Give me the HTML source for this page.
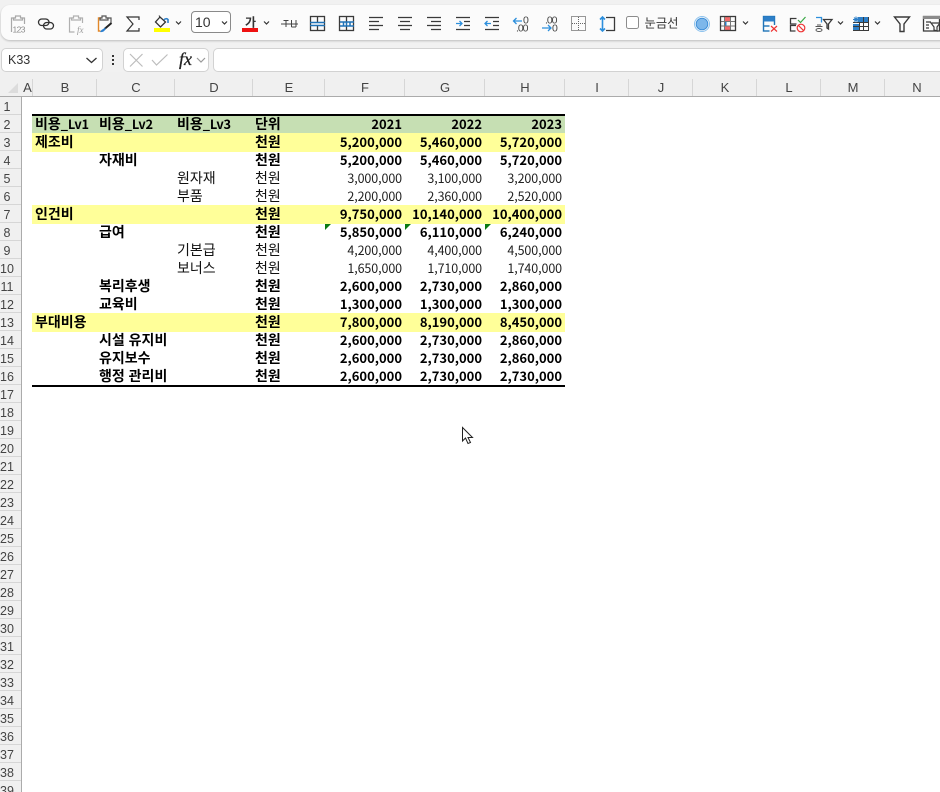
<!DOCTYPE html>
<html lang="ko"><head><meta charset="utf-8"><title>Sheet</title>
<style>
html,body{margin:0;padding:0;background:#fff;width:940px;height:792px;overflow:hidden}
#page{width:940px;height:792px;position:relative;overflow:hidden;font-family:"Liberation Sans","Noto Sans CJK KR",sans-serif;color:#000}
.a{position:absolute}
#top{left:0;top:0;width:940px;height:72px;background:#f1f1f1}
#bar{left:1px;top:5px;width:960px;height:35px;background:#fbfbfb;border-radius:9px;box-shadow:0 1px 2px rgba(0,0,0,.22)}
.box{position:absolute;background:#fff;border:1px solid #d2d2d2;border-radius:5px;box-sizing:border-box}
#ch{left:0;top:72px;width:940px;height:24px;background:#f0f0f0;border-bottom:1px solid #ababab}
#rh{left:0;top:97px;width:21px;height:695px;background:#f0f0f0;border-right:1px solid #ababab}
.c{position:absolute;top:72px;height:24px;line-height:31px;font-size:13px;color:#444;text-align:center;box-sizing:border-box}
.c:after{content:"";position:absolute;right:0;top:7px;bottom:0;width:1px;background:#d6d6d6}
.r{position:absolute;left:0;width:21px;height:18px;box-sizing:border-box;border-bottom:1px solid #d6d6d6;font-size:12.5px;line-height:18px;color:#444;overflow:hidden}
.r span{position:absolute;left:-3px;top:1px;width:20px;text-align:center}
.b{position:absolute;height:19px;left:32px;width:533px}
.t{position:absolute;font-family:"Noto Sans CJK KR","Liberation Sans",sans-serif;font-size:14px;line-height:18px;white-space:pre;color:#111}
.t i{font-style:normal;font-size:12.8px;letter-spacing:-.2px}
.w{font-weight:700;color:#000}
.n{position:absolute;text-align:right;font-family:"Noto Sans CJK KR","Liberation Sans",sans-serif;font-size:12.5px;letter-spacing:-.1px;line-height:18px;width:76px;color:#222}
.n.w{color:#000;font-weight:700;font-size:13px;letter-spacing:0}
.tri{position:absolute;width:0;height:0;border-top:6px solid #0a7a12;border-right:6px solid transparent}
svg{position:absolute;overflow:visible}
.s{fill:none;stroke:#3a3a3a;stroke-width:1.3}
.bl{fill:none;stroke:#1f73b7;stroke-width:1.5}
.lb{fill:none;stroke:#2d8fdc;stroke-width:1.3}
.chev{fill:none;stroke:#333;stroke-width:1.2}
</style></head><body><div id="page">
<div id="top" class="a"></div>
<div id="bar" class="a"></div>

<svg class="tb" style="left:0;top:0" width="940" height="72" viewBox="0 0 940 72">
<!-- paste values -->
<g fill="none" stroke="#a8a8a8" stroke-width="1.2">
<path d="M15 18h-3.500v14M21 18h3.500v6"/><path d="M15.500 18v-2h5v2h2v2h-9v-2z"/>
</g>
<text x="12.500" y="32.500" font-size="8.500" fill="#8c8c8c" font-family="Liberation Sans" textLength="13">123</text>
<!-- link -->
<rect x="38.500" y="19" width="10.500" height="6.500" rx="3.250" fill="none" stroke="#333" stroke-width="1.300"/>
<rect x="43.500" y="22.500" width="10" height="6.500" rx="3.250" fill="none" stroke="#333" stroke-width="1.300"/>
<!-- paste fx -->
<g fill="none" stroke="#b0b0b0" stroke-width="1.2">
<path d="M73 18h-3.500v14h5M79 18h3.500v5"/><path d="M73.500 18v-2h5v2h2v2h-9v-2z"/>
</g>
<text x="77" y="33" font-size="9" fill="#9a9a9a" font-style="italic" font-family="Liberation Serif">fx</text>
<!-- paste format -->
<path d="M101 18h-2.500v13h2" fill="none" stroke="#e2882a" stroke-width="1.4"/>
<path d="M107 18h4v5" fill="none" stroke="#555" stroke-width="1.2"/>
<path d="M102 18v-2h4v2h2v2h-8v-2z" fill="none" stroke="#555" stroke-width="1.2"/>
<path d="M111.500 23l-7 6" fill="none" stroke="#222" stroke-width="2"/>
<path d="M105.500 27.500l-4 2.500-1.500 2c2.500.5 4.500-.5 5.500-3z" fill="#2a7fd0"/>
<!-- sigma -->
<path d="M139 20v-3h-12l6 7-6 7h12v-3" fill="none" stroke="#333" stroke-width="1.2"/>
<!-- fill -->
<path d="M160 17l-4.500 5 5 5 5-5z" fill="none" stroke="#333" stroke-width="1.3"/>
<path d="M159 15.500l1.500 2.500" stroke="#333" fill="none"/>
<path d="M164 20a2.500 2.500 0 0 1 4-.5v3.500" fill="none" stroke="#2d7fc8" stroke-width="1.6"/>
<rect x="154" y="28" width="16" height="4" fill="#ffff00"/>
<path class="chev" d="M176 21.500l2.500 2.500 2.500-2.500"/>
<!-- font size -->
<rect x="191.500" y="11.500" width="39" height="21" rx="3.500" fill="#fff" stroke="#8a8a8a"/>
<text x="195" y="27" font-size="14" fill="#333" font-family="Liberation Sans">10</text>
<path class="chev" d="M222 21.500l2.500 2.500 2.500-2.500"/>
<!-- Ga -->
<text x="245" y="26.500" font-size="12" font-weight="700" fill="#333" font-family="Noto Sans CJK KR">가</text>
<rect x="242" y="28" width="16" height="4" fill="#ee1111"/>
<path class="chev" d="M264 21.500l2.500 2.500 2.500-2.500"/>
<!-- strikethrough -->
<path d="M281 24h17M283.500 20.500h5M286 20.500v6.500M291.500 20v7M296 20v7M291.500 27h4.500" fill="none" stroke="#444" stroke-width="1"/>
<!-- border icons -->
<rect class="s" x="310.500" y="16.500" width="14" height="14"/><path class="s" d="M317.500 16.500v6M317.500 26v4.500"/><path class="bl" d="M310 22.500h15M310 25.500h15"/>
<rect class="s" x="339.500" y="16.500" width="14" height="14"/><path class="s" d="M346.500 16.500v7M346.500 26v4.500"/><path class="bl" d="M340 22h14M340 26h14M343.500 22v4M346.500 22v4M350 22v4"/>
<!-- aligns -->
<path class="s" d="M369 17.500h14M369 21.500h10M369 25.500h14M369 29.500h10"/>
<path class="s" d="M398 17.500h14M400 21.500h10M398 25.500h14M400 29.500h10"/>
<path class="s" d="M427 17.500h14M431 21.500h10M427 25.500h14M431 29.500h10"/>
<path class="s" d="M456 17.500h14M464 21.500h6M464 25.500h6M456 29.500h14"/>
<path class="lb" d="M456 23.500h6M459.500 21l2.500 2.500-2.500 2.500"/>
<path class="s" d="M485 17.500h14M493 21.500h6M493 25.500h6M485 29.500h14"/>
<path class="lb" d="M491 23.500h-6M487.500 21l-2.500 2.500 2.500 2.500"/>
<!-- decimals -->
<path class="lb" d="M514 21h8M516.500 18l-3 3 3 3"/>
<text x="523" y="23.500" font-size="10.500" fill="#444" font-family="Liberation Sans" textLength="5.500">0</text>
<text x="516" y="31.500" font-size="10.500" fill="#444" font-family="Liberation Sans" textLength="12.500">.00</text>
<text x="545" y="23.500" font-size="10.500" fill="#444" font-family="Liberation Sans" textLength="12.500">.00</text>
<path class="lb" d="M542 28h9M548 25l3 3-3 3"/>
<text x="552" y="31.500" font-size="10.500" fill="#444" font-family="Liberation Sans" textLength="5.500">0</text>
<!-- dotted -->
<rect x="571.500" y="16.500" width="14" height="14" fill="none" stroke="#333" stroke-dasharray="1 1"/>
<path d="M578.500 17v13M572 23.500h13" fill="none" stroke="#666" stroke-dasharray="1 1"/>
<!-- row height -->
<path class="lb" style="stroke-width:1.6" d="M602.500 17v14M600 19.500l2.500-2.500 2.500 2.500M600 28.500l2.500 2.500 2.500-2.500"/>
<path class="s" d="M606 17.500h8.500v13h-8.500"/>
<!-- checkbox -->
<rect x="626.500" y="16.500" width="12" height="12" rx="2" fill="#fff" stroke="#8c8c8c"/>
<text x="644.500" y="27.500" font-size="12.300" fill="#333" font-family="Noto Sans CJK KR">눈금선</text>
<!-- circle -->
<circle cx="702" cy="24" r="7.500" fill="none" stroke="#8ec3ee" stroke-width="1"/>
<circle cx="702" cy="24" r="5.800" fill="#7db7ea" stroke="#3f8fd8" stroke-width="1"/>
<!-- grid red -->
<rect x="724" y="17" width="6.500" height="5" fill="#f36b6b"/><rect x="724" y="26" width="6.500" height="5" fill="#f36b6b"/><rect x="724" y="22" width="2.500" height="4" fill="#2d7fc8"/>
<path d="M724.500 17v14M730.500 17v14M720.500 21.500h15M720.500 26h15" fill="none" stroke="#777" stroke-width="1"/>
<rect class="s" x="720.500" y="16.500" width="15" height="14"/>
<path class="chev" d="M743 21.500l2.500 2.500 2.500-2.500"/>
<!-- remove dup -->
<rect x="763.500" y="16.500" width="11" height="14.500" fill="none" stroke="#1f73b7" stroke-width="1.400"/><rect x="763.500" y="16.500" width="11" height="5" fill="#2d7fc8"/><path d="M763.500 26h6" stroke="#1f73b7" stroke-width="1.400"/>
<rect x="769.500" y="25" width="8.500" height="8" fill="#fbfbfb"/>
<path d="M771 26l6 5.500M777 26l-6 5.500" fill="none" stroke="#e33" stroke-width="1.200"/>
<!-- validation -->
<path class="s" d="M796.500 18.500h-6v5.500h6M796 25.500h-5.500v5.500h5"/>
<path d="M798 20l2.500 2.500 5-5.500" fill="none" stroke="#39a845" stroke-width="1.2"/>
<circle cx="801" cy="28" r="3.800" fill="none" stroke="#e33" stroke-width="1.2"/><path d="M798.500 25.500l5 5" stroke="#e33" stroke-width="1.2"/>
<!-- filter ko -->
<path class="lb" d="M816 17.500h5.500v5"/>
<path d="M815.500 26.500h7M817 25h4M816 30a3 1.500 0 0 0 6 0a3 1.500 0 0 0-6 0" fill="none" stroke="#555" stroke-width="1"/>
<path class="s" d="M823.500 19.500h8.500l-3.500 4.500v5l-1.500-1v-4z"/>
<path class="chev" d="M838 21.500l2.500 2.500 2.500-2.500"/>
<!-- freeze -->
<rect x="858" y="17" width="11" height="5" fill="#2d7fc8"/><rect x="853" y="24" width="6" height="7" fill="#2d7fc8"/>
<path d="M859.500 22v9M863.500 17v14M853 22.500h16M853 26.500h16M868.500 17v14M853 30.500h16" fill="none" stroke="#3a3a3a" stroke-width="1"/>
<path d="M853 19.500h6M856 16.500v6M854 17.500l4 4M858 17.500l-4 4" stroke="#2d7fc8" stroke-width="1" fill="none"/>
<path class="chev" d="M875 21.500l2.500 2.500 2.500-2.500"/>
<!-- funnel -->
<path d="M894.500 17h15l-5.500 7v7.500h-4v-7.500z" fill="none" stroke="#3a3a3a" stroke-width="1.4"/>
<!-- advanced filter -->
<rect x="923.500" y="16.500" width="16" height="14.500" fill="none" stroke="#3a3a3a" stroke-width="1.300"/><rect x="923" y="16" width="17" height="3" fill="#8b8b8b"/>
<path class="s" d="M926 22h5M926 25h3M926 28h3"/><path d="M931 23h9l-3 4v4l-3-1v-3z" fill="#fbfbfb" stroke="#3a3a3a" stroke-width="1.200"/>
</svg>

<!-- formula bar -->
<div class="box" style="left:1px;top:48px;width:102px;height:24px"></div>
<div class="a" style="left:8px;top:51px;font-size:12.500px;line-height:18px;color:#333">K33</div>
<div class="box" style="left:123px;top:48px;width:86px;height:24px"></div>
<div class="box" style="left:213px;top:48px;width:727px;height:24px;border-right:0;border-radius:5px 0 0 5px"></div>
<svg style="left:0;top:0" width="300" height="72" viewBox="0 0 300 72">
<path d="M86.500 58l5 4.500 5-4.500" fill="none" stroke="#333" stroke-width="1.300"/>
<rect x="112" y="55" width="2" height="2" fill="#333"/><rect x="112" y="59" width="2" height="2" fill="#333"/><rect x="112" y="63" width="2" height="2" fill="#333"/>
<path d="M130 54l12.500 12.500M142.500 54l-12.500 12.500" stroke="#bdbdbd" stroke-width="1.200" fill="none"/>
<path d="M152 60l4.500 5 11-10.500" stroke="#bdbdbd" stroke-width="1.200" fill="none"/>
<text x="179" y="65" font-size="18" font-style="italic" fill="#222" stroke="#222" stroke-width=".3" font-family="Liberation Serif">fx</text>
<path d="M197 58l4 4 4-4" fill="none" stroke="#999" stroke-width="1.200"/>
</svg>

<!-- column headers -->
<div id="ch" class="a"></div>
<svg style="left:0;top:72px" width="22" height="24"><path d="M18 11v10H8z" fill="#dcdcdc"/></svg>
<div class="c" style="left:22px;width:11px">A</div>
<div class="c" style="left:33px;width:64px">B</div>
<div class="c" style="left:97px;width:78px">C</div>
<div class="c" style="left:175px;width:78px">D</div>
<div class="c" style="left:253px;width:72px">E</div>
<div class="c" style="left:325px;width:80px">F</div>
<div class="c" style="left:405px;width:80px">G</div>
<div class="c" style="left:485px;width:80px">H</div>
<div class="c" style="left:565px;width:64px">I</div>
<div class="c" style="left:629px;width:64px">J</div>
<div class="c" style="left:693px;width:64px">K</div>
<div class="c" style="left:757px;width:64px">L</div>
<div class="c" style="left:821px;width:64px">M</div>
<div class="c" style="left:885px;width:64px">N</div>

<!-- row headers -->
<div id="rh" class="a"></div>
<div class="r" style="top:97px"><span>1</span></div>
<div class="r" style="top:115px"><span>2</span></div>
<div class="r" style="top:133px"><span>3</span></div>
<div class="r" style="top:151px"><span>4</span></div>
<div class="r" style="top:169px"><span>5</span></div>
<div class="r" style="top:187px"><span>6</span></div>
<div class="r" style="top:205px"><span>7</span></div>
<div class="r" style="top:223px"><span>8</span></div>
<div class="r" style="top:241px"><span>9</span></div>
<div class="r" style="top:259px"><span>10</span></div>
<div class="r" style="top:277px"><span>11</span></div>
<div class="r" style="top:295px"><span>12</span></div>
<div class="r" style="top:313px"><span>13</span></div>
<div class="r" style="top:331px"><span>14</span></div>
<div class="r" style="top:349px"><span>15</span></div>
<div class="r" style="top:367px"><span>16</span></div>
<div class="r" style="top:385px"><span>17</span></div>
<div class="r" style="top:403px"><span>18</span></div>
<div class="r" style="top:421px"><span>19</span></div>
<div class="r" style="top:439px"><span>20</span></div>
<div class="r" style="top:457px"><span>21</span></div>
<div class="r" style="top:475px"><span>22</span></div>
<div class="r" style="top:493px"><span>23</span></div>
<div class="r" style="top:511px"><span>24</span></div>
<div class="r" style="top:529px"><span>25</span></div>
<div class="r" style="top:547px"><span>26</span></div>
<div class="r" style="top:565px"><span>27</span></div>
<div class="r" style="top:583px"><span>28</span></div>
<div class="r" style="top:601px"><span>29</span></div>
<div class="r" style="top:619px"><span>30</span></div>
<div class="r" style="top:637px"><span>31</span></div>
<div class="r" style="top:655px"><span>32</span></div>
<div class="r" style="top:673px"><span>33</span></div>
<div class="r" style="top:691px"><span>34</span></div>
<div class="r" style="top:709px"><span>35</span></div>
<div class="r" style="top:727px"><span>36</span></div>
<div class="r" style="top:745px"><span>37</span></div>
<div class="r" style="top:763px"><span>38</span></div>
<div class="r" style="top:781px;height:11px;border-bottom:0"><span>39</span></div>

<!-- fills -->
<div class="b" style="top:115px;height:18px;background:#c6dfb3"></div>
<div class="b" style="top:133px;background:#ffff99"></div>
<div class="b" style="top:205px;background:#ffff99"></div>
<div class="b" style="top:313px;background:#ffff99"></div>
<div class="b" style="top:114px;height:2px;background:#000"></div>
<div class="b" style="top:385px;height:2px;background:#000"></div>

<!-- text columns -->
<div class="t w" style="left:35px;top:115px">비용<i>_Lv1</i></div><div class="t w" style="left:99px;top:115px">비용<i>_Lv2</i></div><div class="t w" style="left:177px;top:115px">비용<i>_Lv3</i></div><div class="t w" style="left:255px;top:115px">단위</div>
<div class="n w" style="left:326px;top:115px">2021</div><div class="n w" style="left:406px;top:115px">2022</div><div class="n w" style="left:486px;top:115px">2023</div>

<div class="t w" style="left:35px;top:133px">제조비</div><div class="t w" style="left:255px;top:133px">천원</div>
<div class="n w" style="left:326px;top:133px">5,200,000</div><div class="n w" style="left:406px;top:133px">5,460,000</div><div class="n w" style="left:486px;top:133px">5,720,000</div>

<div class="t w" style="left:99px;top:151px">자재비</div><div class="t w" style="left:255px;top:151px">천원</div>
<div class="n w" style="left:326px;top:151px">5,200,000</div><div class="n w" style="left:406px;top:151px">5,460,000</div><div class="n w" style="left:486px;top:151px">5,720,000</div>

<div class="t" style="left:177px;top:169px">원자재</div><div class="t" style="left:255px;top:169px">천원</div>
<div class="n" style="left:326px;top:169px">3,000,000</div><div class="n" style="left:406px;top:169px">3,100,000</div><div class="n" style="left:486px;top:169px">3,200,000</div>

<div class="t" style="left:177px;top:187px">부품</div><div class="t" style="left:255px;top:187px">천원</div>
<div class="n" style="left:326px;top:187px">2,200,000</div><div class="n" style="left:406px;top:187px">2,360,000</div><div class="n" style="left:486px;top:187px">2,520,000</div>

<div class="t w" style="left:35px;top:205px">인건비</div><div class="t w" style="left:255px;top:205px">천원</div>
<div class="n w" style="left:326px;top:205px">9,750,000</div><div class="n w" style="left:406px;top:205px">10,140,000</div><div class="n w" style="left:486px;top:205px">10,400,000</div>

<div class="t w" style="left:99px;top:223px">급여</div><div class="t w" style="left:255px;top:223px">천원</div>
<div class="n w" style="left:326px;top:223px">5,850,000</div><div class="n w" style="left:406px;top:223px">6,110,000</div><div class="n w" style="left:486px;top:223px">6,240,000</div>
<div class="tri" style="left:325px;top:224px"></div><div class="tri" style="left:405px;top:224px"></div><div class="tri" style="left:485px;top:224px"></div>

<div class="t" style="left:177px;top:241px">기본급</div><div class="t" style="left:255px;top:241px">천원</div>
<div class="n" style="left:326px;top:241px">4,200,000</div><div class="n" style="left:406px;top:241px">4,400,000</div><div class="n" style="left:486px;top:241px">4,500,000</div>

<div class="t" style="left:177px;top:259px">보너스</div><div class="t" style="left:255px;top:259px">천원</div>
<div class="n" style="left:326px;top:259px">1,650,000</div><div class="n" style="left:406px;top:259px">1,710,000</div><div class="n" style="left:486px;top:259px">1,740,000</div>

<div class="t w" style="left:99px;top:277px">복리후생</div><div class="t w" style="left:255px;top:277px">천원</div>
<div class="n w" style="left:326px;top:277px">2,600,000</div><div class="n w" style="left:406px;top:277px">2,730,000</div><div class="n w" style="left:486px;top:277px">2,860,000</div>

<div class="t w" style="left:99px;top:295px">교육비</div><div class="t w" style="left:255px;top:295px">천원</div>
<div class="n w" style="left:326px;top:295px">1,300,000</div><div class="n w" style="left:406px;top:295px">1,300,000</div><div class="n w" style="left:486px;top:295px">1,300,000</div>

<div class="t w" style="left:35px;top:313px">부대비용</div><div class="t w" style="left:255px;top:313px">천원</div>
<div class="n w" style="left:326px;top:313px">7,800,000</div><div class="n w" style="left:406px;top:313px">8,190,000</div><div class="n w" style="left:486px;top:313px">8,450,000</div>

<div class="t w" style="left:99px;top:331px">시설 유지비</div><div class="t w" style="left:255px;top:331px">천원</div>
<div class="n w" style="left:326px;top:331px">2,600,000</div><div class="n w" style="left:406px;top:331px">2,730,000</div><div class="n w" style="left:486px;top:331px">2,860,000</div>

<div class="t w" style="left:99px;top:349px">유지보수</div><div class="t w" style="left:255px;top:349px">천원</div>
<div class="n w" style="left:326px;top:349px">2,600,000</div><div class="n w" style="left:406px;top:349px">2,730,000</div><div class="n w" style="left:486px;top:349px">2,860,000</div>

<div class="t w" style="left:99px;top:367px">행정 관리비</div><div class="t w" style="left:255px;top:367px">천원</div>
<div class="n w" style="left:326px;top:367px">2,600,000</div><div class="n w" style="left:406px;top:367px">2,730,000</div><div class="n w" style="left:486px;top:367px">2,730,000</div>

<!-- cursor -->
<svg style="left:462px;top:427px" width="14" height="20" viewBox="0 0 14 20">
<path d="M.5.500v13.500l3-3 2.500 5.500 2.500-1-2.500-5h4.500z" fill="#fff" stroke="#222" stroke-width="1"/>
</svg>
</div></body></html>
